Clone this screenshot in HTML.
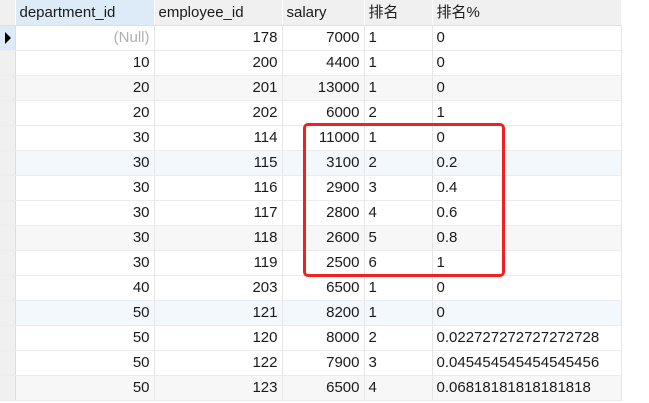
<!DOCTYPE html>
<html><head><meta charset="utf-8"><style>
body{margin:0;width:649px;height:403px;overflow:hidden;background:#fff;font-family:"Liberation Sans","Noto Sans CJK SC",sans-serif;font-size:15px;color:#1a1a1a;position:relative}
table{border-collapse:collapse;position:absolute;left:0;top:0;table-layout:fixed}
td,th{height:24px;line-height:24px;padding:0 4px;border-right:1px solid #e6e6e6;border-bottom:1px solid #ececec;white-space:nowrap;overflow:hidden;font-weight:normal}
th{background:#f0f0f0;text-align:left;height:25px;border-bottom:1px solid #e0e0e0;border-right:1px solid #fff}
th.sel{background:#dcebf7}
td.i{background:#f0f0f0;padding:0;border-right:1px solid #ddd}
td.r{text-align:right}
tr.g td{background:#f7f7f7}
tr.b td{background:#f3f8fd}
tr td.i{background:#f0f0f0}
.null{color:#b0b0b0}
.box{position:absolute;left:303px;top:123px;width:196px;height:148px;border:3px solid #f0211f;border-radius:5px}
.arrow{width:0;height:0;border-top:6px solid transparent;border-bottom:6px solid transparent;border-left:6px solid #000;margin-left:5px}
</style></head><body>
<table>
<colgroup><col style="width:15px"><col style="width:139px"><col style="width:128px"><col style="width:82px"><col style="width:68px"><col style="width:189px"></colgroup>
<tr><th style="background:#f0f0f0;padding:0"></th><th class="sel">department_id</th><th>employee_id</th><th>salary</th><th>排名</th><th>排名%</th></tr>
<tr><td class="i" style="background:#dcebf7"><div class="arrow"></div></td><td class="r null">(Null)</td><td class="r">178</td><td class="r">7000</td><td>1</td><td>0</td></tr>
<tr><td class="i"></td><td class="r">10</td><td class="r">200</td><td class="r">4400</td><td>1</td><td>0</td></tr>
<tr class="g"><td class="i"></td><td class="r">20</td><td class="r">201</td><td class="r">13000</td><td>1</td><td>0</td></tr>
<tr><td class="i"></td><td class="r">20</td><td class="r">202</td><td class="r">6000</td><td>2</td><td>1</td></tr>
<tr><td class="i"></td><td class="r">30</td><td class="r">114</td><td class="r">11000</td><td>1</td><td>0</td></tr>
<tr class="b"><td class="i"></td><td class="r">30</td><td class="r">115</td><td class="r">3100</td><td>2</td><td>0.2</td></tr>
<tr><td class="i"></td><td class="r">30</td><td class="r">116</td><td class="r">2900</td><td>3</td><td>0.4</td></tr>
<tr><td class="i"></td><td class="r">30</td><td class="r">117</td><td class="r">2800</td><td>4</td><td>0.6</td></tr>
<tr class="g"><td class="i"></td><td class="r">30</td><td class="r">118</td><td class="r">2600</td><td>5</td><td>0.8</td></tr>
<tr><td class="i"></td><td class="r">30</td><td class="r">119</td><td class="r">2500</td><td>6</td><td>1</td></tr>
<tr><td class="i"></td><td class="r">40</td><td class="r">203</td><td class="r">6500</td><td>1</td><td>0</td></tr>
<tr class="b"><td class="i"></td><td class="r">50</td><td class="r">121</td><td class="r">8200</td><td>1</td><td>0</td></tr>
<tr><td class="i"></td><td class="r">50</td><td class="r">120</td><td class="r">8000</td><td>2</td><td>0.022727272727272728</td></tr>
<tr><td class="i"></td><td class="r">50</td><td class="r">122</td><td class="r">7900</td><td>3</td><td>0.045454545454545456</td></tr>
<tr class="g"><td class="i"></td><td class="r">50</td><td class="r">123</td><td class="r">6500</td><td>4</td><td>0.06818181818181818</td></tr>
</table>
<div class="box"></div>
</body></html>
